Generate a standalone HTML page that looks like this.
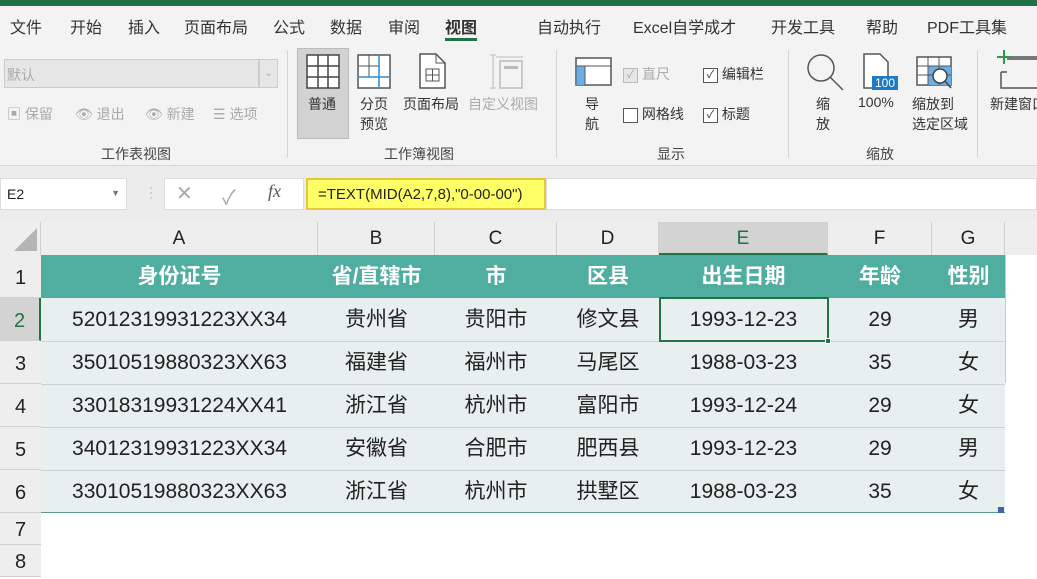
<!DOCTYPE html>
<html><head><meta charset="utf-8"><style>
*{margin:0;padding:0;box-sizing:border-box}
body{width:1037px;height:562px;overflow:hidden;background:#fff;font-family:"Liberation Sans","Noto Sans CJK SC",sans-serif;position:relative;color:#222}
.a{position:absolute}
.tab{position:absolute;top:14px;font-size:16px;color:#333;white-space:nowrap}
.rb{font-size:14px;color:#333;position:absolute;white-space:nowrap}
.dis{color:#aaa}
.sep{position:absolute;top:50px;width:1px;height:108px;background:#d4d4d4}
.grp{position:absolute;top:144px;font-size:14px;color:#444}
.ch{position:absolute;top:222px;height:33px;border-right:1px solid #d0d0d0;text-align:center;font-size:19px;line-height:33px;color:#222;background:#eee}
.rh{position:absolute;left:0;width:41px;text-align:center;font-size:20px;color:#222;background:#eee;border-bottom:1px solid #d0d0d0}
.c{position:absolute;text-align:center;font-size:21px;line-height:43px;height:43px}
.hd{color:#fff;font-weight:bold}
.cb{display:inline-block;width:15px;height:15px;border:1px solid #555;background:#fff;vertical-align:middle;font-size:11px;line-height:13px;text-align:center}
</style></head><body>
<div class="a" style="left:0;top:0;width:1037px;height:6px;background:#217346"></div>
<div class="a" style="left:0;top:6px;width:1037px;height:159px;background:#f3f3f3"></div>
<div class="tab" style="left:10px">文件</div>
<div class="tab" style="left:70px">开始</div>
<div class="tab" style="left:128px">插入</div>
<div class="tab" style="left:184px">页面布局</div>
<div class="tab" style="left:273px">公式</div>
<div class="tab" style="left:330px">数据</div>
<div class="tab" style="left:388px">审阅</div>
<div class="tab" style="left:445px;font-weight:bold">视图</div>
<div class="a" style="left:445px;top:38px;width:32px;height:3px;background:#217346"></div>
<div class="tab" style="left:537px">自动执行</div>
<div class="tab" style="left:633px">Excel自学成才</div>
<div class="tab" style="left:771px">开发工具</div>
<div class="tab" style="left:866px">帮助</div>
<div class="tab" style="left:927px">PDF工具集</div>
<!-- group 1 -->
<div class="a" style="left:4px;top:59px;width:255px;height:29px;background:#e6e6e6;border:1px solid #ccc;font-size:14px;color:#aaa;padding:5px 2px">默认</div>
<div class="a" style="left:259px;top:59px;width:19px;height:29px;background:#e6e6e6;border:1px solid #ccc;color:#aaa;font-size:10px;text-align:center;line-height:27px">⌄</div>
<div class="rb dis" style="left:7px;top:104px">▣ 保留</div>
<div class="rb dis" style="left:75px;top:104px">👁 退出</div>
<div class="rb dis" style="left:145px;top:104px">👁 新建</div>
<div class="rb dis" style="left:213px;top:104px">☰ 选项</div>
<div class="grp" style="left:101px">工作表视图</div>
<div class="sep" style="left:287px"></div>
<!-- group 2 -->
<div class="a" style="left:297px;top:48px;width:52px;height:91px;background:#d2d2d2;border:1px solid #bbb"></div>
<svg class="a" style="left:306px;top:54px" width="36" height="36"><g stroke="#444" stroke-width="1.5" fill="#fff"><rect x="1" y="1" width="32" height="33"/><path d="M12 1V34M22 1V34M1 12H33M1 23H33" fill="none"/></g></svg>
<div class="rb" style="left:308px;top:94px">普通</div>
<svg class="a" style="left:357px;top:54px" width="36" height="36"><rect x="1" y="1" width="32" height="33" fill="#fff" stroke="#555" stroke-width="1.5"/><path d="M12 1V23M1 12H22" stroke="#555"/><path d="M22 1V34M1 23H33" stroke="#2a8ad4" stroke-width="1.5"/></svg>
<div class="rb" style="left:360px;top:94px;line-height:20px">分页<br>预览</div>
<svg class="a" style="left:418px;top:53px" width="30" height="37"><path d="M2 1H18L27 10V35H2Z" fill="#fff" stroke="#555" stroke-width="1.5"/><path d="M18 1V10H27" fill="none" stroke="#555"/><rect x="8" y="16" width="13" height="12" fill="none" stroke="#555"/><path d="M8 22H21M14.5 16V28" stroke="#555"/></svg>
<div class="rb" style="left:403px;top:94px">页面布局</div>
<svg class="a" style="left:488px;top:53px" width="38" height="37"><path d="M5 2V35M2 2H8M2 35H8M8 4H35" stroke="#bbb"/><rect x="12" y="8" width="22" height="27" fill="none" stroke="#bbb" stroke-width="1.5"/><rect x="16" y="13" width="14" height="3" fill="#bbb"/></svg>
<div class="rb dis" style="left:468px;top:94px">自定义视图</div>
<div class="grp" style="left:384px">工作簿视图</div>
<div class="sep" style="left:556px"></div>
<!-- group 3 -->
<svg class="a" style="left:575px;top:57px" width="38" height="30"><rect x="1" y="1" width="35" height="27" fill="#fff" stroke="#555" stroke-width="1.5"/><rect x="1.5" y="9" width="8" height="19" fill="#6aaee6"/><path d="M1 9H36M10 9V28" stroke="#555"/></svg>
<div class="rb" style="left:585px;top:94px;line-height:20px">导<br>航</div>
<div class="rb dis" style="left:623px;top:64px"><span class="cb" style="border-color:#bbb;background:#e6e6e6;color:#aaa">✓</span> 直尺</div>
<div class="rb" style="left:703px;top:64px"><span class="cb">✓</span> 编辑栏</div>
<div class="rb" style="left:623px;top:104px"><span class="cb"></span> 网格线</div>
<div class="rb" style="left:703px;top:104px"><span class="cb">✓</span> 标题</div>
<div class="grp" style="left:657px">显示</div>
<div class="sep" style="left:788px"></div>
<!-- group 4 -->
<svg class="a" style="left:805px;top:52px" width="40" height="40"><circle cx="16" cy="16" r="13" fill="none" stroke="#555" stroke-width="1.5"/><path d="M25 25L38 38" stroke="#555" stroke-width="1.5"/></svg>
<div class="rb" style="left:816px;top:94px;line-height:20px">缩<br>放</div>
<svg class="a" style="left:862px;top:53px" width="38" height="38"><path d="M2 1H18L26 9V35H2Z" fill="#fff" stroke="#555" stroke-width="1.5"/><rect x="10" y="23" width="26" height="14" fill="#1e7ac8"/><text x="23" y="34" fill="#fff" font-size="12" text-anchor="middle" font-family="Liberation Sans">100</text></svg>
<div class="rb" style="left:858px;top:94px">100%</div>
<svg class="a" style="left:916px;top:56px" width="40" height="36"><rect x="1" y="1" width="34" height="28" fill="#fff" stroke="#555" stroke-width="1.5"/><rect x="12" y="10" width="23" height="19" fill="#6aaee6"/><path d="M1 10H35M1 19H35M12 1V29M23 1V29" stroke="#555"/><circle cx="24" cy="20" r="7" fill="#fff" stroke="#444" stroke-width="1.5"/><path d="M29 25L35 32" stroke="#444" stroke-width="1.5"/></svg>
<div class="rb" style="left:912px;top:94px;line-height:20px">缩放到<br>选定区域</div>
<div class="grp" style="left:866px">缩放</div>
<div class="sep" style="left:977px"></div>
<svg class="a" style="left:995px;top:50px" width="42" height="40"><path d="M6 22V38H42M6 22H12" fill="none" stroke="#555" stroke-width="1.5"/><path d="M12 8H42" stroke="#777" stroke-width="4"/><path d="M9 0V14M2 7H16" stroke="#2c9a4a" stroke-width="2"/></svg>
<div class="rb" style="left:990px;top:94px">新建窗口</div>
<!-- formula area -->
<div class="a" style="left:0;top:165px;width:1037px;height:57px;background:#ececec;border-top:1px solid #d6d6d6"></div>
<div class="a" style="left:0;top:178px;width:127px;height:32px;background:#fff;border:1px solid #ddd;font-size:14px;padding:7px 6px">E2<span style="position:absolute;right:6px;top:9px;font-size:9px;color:#777">▼</span></div>
<div class="a" style="left:144px;top:184px;color:#bbb;font-size:14px">⋮</div>
<div class="a" style="left:164px;top:178px;width:140px;height:32px;background:#fff;border:1px solid #ddd"></div>
<div class="a" style="left:176px;top:181px;font-size:20px;color:#aaa">✕</div>
<div class="a" style="left:222px;top:181px;font-size:20px;color:#aaa">✓</div>
<div class="a" style="left:268px;top:181px;font-size:18px;color:#555;font-family:'Liberation Serif',serif;font-style:italic">fx</div>
<div class="a" style="left:306px;top:178px;width:240px;height:32px;background:#ffff66;border:2px solid #e6c83a;font-size:15px;padding:6px 10px">=TEXT(MID(A2,7,8),"0-00-00")</div>
<div class="a" style="left:546px;top:178px;width:491px;height:32px;background:#fff;border:1px solid #ddd"></div>
<!-- column headers -->
<div class="a" style="left:0;top:222px;width:41px;height:33px;background:#eee;border-right:1px solid #d0d0d0"></div>
<svg class="a" style="left:12px;top:228px" width="26" height="24"><path d="M25 0V23H2Z" fill="#b4b4b4"/></svg>
<div class="ch" style="left:41px;width:277px">A</div>
<div class="ch" style="left:318px;width:117px">B</div>
<div class="ch" style="left:435px;width:122px">C</div>
<div class="ch" style="left:557px;width:102px">D</div>
<div class="ch" style="left:659px;width:169px;background:#d3d3d3;border-bottom:2px solid #217346;color:#217346">E</div>
<div class="ch" style="left:828px;width:104px">F</div>
<div class="ch" style="left:932px;width:73px">G</div>
<div class="ch" style="left:1005px;width:32px;border-right:none"></div>
<!-- row headers -->
<div class="rh" style="top:255px;height:43px;line-height:46px">1</div>
<div class="rh" style="top:298px;height:43px;line-height:46px;background:#d3d3d3;color:#217346;border-right:2px solid #217346">2</div>
<div class="rh" style="top:341px;height:43px;line-height:46px">3</div>
<div class="rh" style="top:384px;height:43px;line-height:46px">4</div>
<div class="rh" style="top:427px;height:43px;line-height:46px">5</div>
<div class="rh" style="top:470px;height:43px;line-height:46px">6</div>
<div class="rh" style="top:513px;height:32px;line-height:34px">7</div>
<div class="rh" style="top:545px;height:32px;line-height:34px">8</div>
<div class="a" style="left:41px;top:255px;width:964px;height:43px;background:#4fae9f"></div>
<div class="a" style="left:41px;top:298px;width:964px;height:215px;background:#e8efef"></div>
<div class="a" style="left:41px;top:341px;width:964px;height:1px;background:#c9d2d2"></div>
<div class="a" style="left:41px;top:384px;width:964px;height:1px;background:#c9d2d2"></div>
<div class="a" style="left:41px;top:427px;width:964px;height:1px;background:#c9d2d2"></div>
<div class="a" style="left:41px;top:470px;width:964px;height:1px;background:#c9d2d2"></div>
<div class="a" style="left:41px;top:512px;width:964px;height:1px;background:#5a9a8e"></div>
<div class="a" style="left:1005px;top:255px;width:1px;height:128px;background:#ccc"></div>
<div class="a" style="left:998px;top:507px;width:6px;height:6px;background:#4063b0"></div>
<div id="cells"></div>
<div class="a" style="left:659px;top:297px;width:170px;height:45px;border:2px solid #217346"></div>
<div class="a" style="left:825px;top:338px;width:6px;height:6px;background:#217346;border:1px solid #fff"></div>
<script>
var cols=[[41,277],[318,117],[435,122],[557,102],[659,169],[828,104],[932,73]];
var rows=[["身份证号","省/直辖市","市","区县","出生日期","年龄","性别"],
["52012319931223XX34","贵州省","贵阳市","修文县","1993-12-23","29","男"],
["35010519880323XX63","福建省","福州市","马尾区","1988-03-23","35","女"],
["33018319931224XX41","浙江省","杭州市","富阳市","1993-12-24","29","女"],
["34012319931223XX34","安徽省","合肥市","肥西县","1993-12-23","29","男"],
["33010519880323XX63","浙江省","杭州市","拱墅区","1988-03-23","35","女"]];
var h="";
rows.forEach(function(r,i){r.forEach(function(t,j){h+='<div class="c'+(i==0?' hd':'')+'" style="left:'+cols[j][0]+'px;width:'+cols[j][1]+'px;top:'+(255+43*i)+'px">'+t+'</div>';});});
document.getElementById("cells").innerHTML=h;
</script>
</body></html>
